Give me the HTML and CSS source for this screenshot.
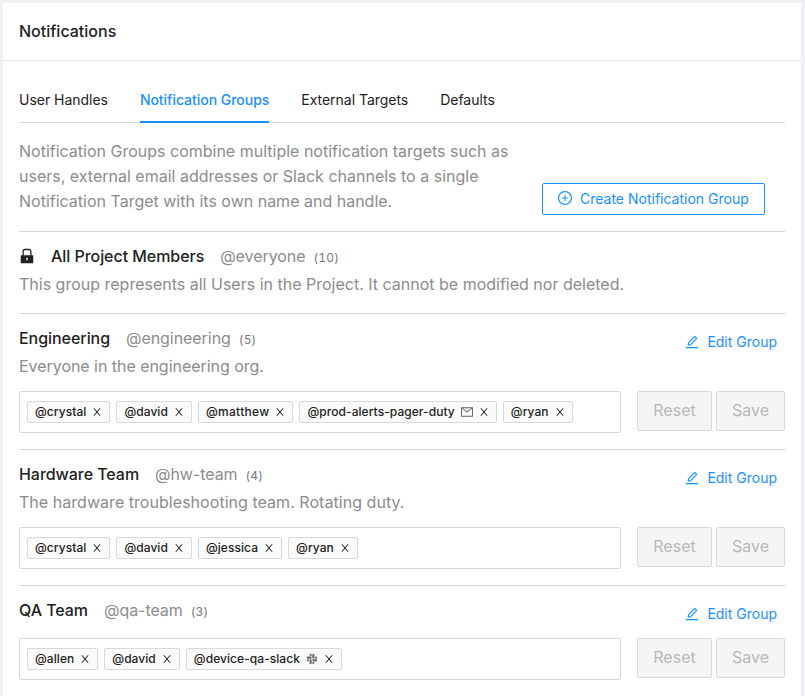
FILE: index.html
```html
<!DOCTYPE html>
<html lang="en">
<head>
<meta charset="utf-8">
<title>Notifications</title>
<link rel="stylesheet" href="styles.css">
</head>
<body>
<svg class="sprite" width="0" height="0">
  <symbol id="close" viewBox="64 64 896 896"><path d="M563.8 512l262.5-312.9c4.4-5.2.7-13.1-6.1-13.1h-79.8c-4.7 0-9.2 2.1-12.3 5.7L511.6 449.8 295.1 191.7c-3-3.6-7.5-5.7-12.3-5.7H203c-6.8 0-10.5 7.9-6.1 13.1L459.4 512 196.9 824.9A7.95 7.95 0 0 0 203 838h79.8c4.7 0 9.2-2.1 12.3-5.7l216.5-258.1 216.5 258.1c3 3.6 7.5 5.7 12.3 5.7h79.8c6.8 0 10.5-7.9 6.1-13.1L563.8 512z"/></symbol>
  <symbol id="plus" viewBox="64 64 896 896"><path d="M696 480H544V328c0-4.4-3.6-8-8-8h-48c-4.4 0-8 3.6-8 8v152H328c-4.4 0-8 3.6-8 8v48c0 4.4 3.6 8 8 8h152v152c0 4.4 3.6 8 8 8h48c4.4 0 8-3.6 8-8V544h152c4.4 0 8-3.6 8-8v-48c0-4.4-3.6-8-8-8z"/><path d="M512 64C264.6 64 64 264.6 64 512s200.6 448 448 448 448-200.6 448-448S759.4 64 512 64zm0 820c-205.4 0-372-166.6-372-372s166.6-372 372-372 372 166.6 372 372-166.6 372-372 372z"/></symbol>
  <symbol id="edit" viewBox="64 64 896 896"><path d="M257.7 752c2 0 4-.2 6-.5L431.9 722c2-.4 3.9-1.3 5.3-2.8l423.9-423.9a9.96 9.96 0 0 0 0-14.1L694.9 114.9c-1.9-1.9-4.4-2.9-7.1-2.9s-5.2 1-7.1 2.9L256.8 538.8c-1.5 1.5-2.4 3.3-2.8 5.3l-29.5 168.2a33.5 33.5 0 0 0 9.4 29.8c6.6 6.4 14.9 9.9 23.8 9.9zm67.4-174.4L687.8 215l73.3 73.3-362.7 362.6-88.9 15.7 15.6-89zM880 836H144c-17.7 0-32 14.3-32 32v36c0 4.4 3.6 8 8 8h784c4.4 0 8-3.6 8-8v-36c0-17.7-14.3-32-32-32z"/></symbol>
  <symbol id="mail" viewBox="64 64 896 896"><path d="M928 160H96c-17.7 0-32 14.3-32 32v640c0 17.7 14.3 32 32 32h832c17.7 0 32-14.3 32-32V192c0-17.7-14.3-32-32-32zm-40 110.8V792H136V270.8l-27.6-21.5 39.3-50.5 42.8 33.3h643.1l42.8-33.3 39.3 50.5-27.7 21.5zM833.6 232L512 482 190.4 232l-42.8-33.3-39.3 50.5 27.6 21.5 341.6 265.6a55.99 55.99 0 0 0 68.7 0L888 270.8l27.6-21.5-39.3-50.5-42.7 33.2z"/></symbol>
  <symbol id="lock" viewBox="64 64 896 896"><path d="M832 464h-68V240c0-70.7-57.3-128-128-128H388c-70.7 0-128 57.3-128 128v224h-68c-17.7 0-32 14.3-32 32v384c0 17.7 14.3 32 32 32h640c17.7 0 32-14.3 32-32V496c0-17.7-14.3-32-32-32zM540 701v53c0 4.4-3.6 8-8 8h-40c-4.4 0-8-3.6-8-8v-53a48.01 48.01 0 1 1 56 0zm152-237H332V240c0-30.9 25.1-56 56-56h248c30.9 0 56 25.1 56 56v224z"/></symbol>
  <symbol id="slack" viewBox="64 64 896 896"><path d="M409.4 128c-42.4 0-76.7 34.4-76.7 76.8 0 20.3 8.1 39.9 22.4 54.3 14.4 14.4 33.9 22.5 54.3 22.5h76.7v-76.8c0-42.3-34.3-76.7-76.7-76.8zm0 204.8H204.7c-42.4 0-76.7 34.4-76.7 76.8s34.4 76.8 76.7 76.8h204.6c42.4 0 76.7-34.4 76.7-76.8.1-42.4-34.3-76.8-76.6-76.8zM614 486.4c42.4 0 76.8-34.4 76.7-76.8V204.8c0-42.4-34.3-76.8-76.7-76.8-42.4 0-76.7 34.4-76.7 76.8v204.8c0 42.5 34.3 76.8 76.7 76.8zm281.4-76.8c0-42.4-34.4-76.8-76.7-76.8S742 367.2 742 409.6v76.8h76.7c42.3 0 76.7-34.4 76.7-76.8zm-76.8 128H614c-42.4 0-76.7 34.4-76.7 76.8 0 20.3 8.1 39.9 22.4 54.3 14.4 14.4 33.9 22.5 54.3 22.5h204.6c42.4 0 76.7-34.4 76.7-76.8.1-42.4-34.3-76.7-76.7-76.8zM614 742.4h-76.7v76.8c0 42.4 34.4 76.8 76.7 76.8 42.4 0 76.8-34.4 76.7-76.8.1-42.4-34.3-76.7-76.7-76.8zM409.4 537.6c-42.4 0-76.7 34.4-76.7 76.8v204.8c0 42.4 34.4 76.8 76.7 76.8 42.4 0 76.8-34.4 76.7-76.8V614.4c0-20.3-8.1-39.9-22.4-54.3-14.4-14.4-34-22.5-54.3-22.5zM128 614.4c0 20.3 8.1 39.9 22.4 54.3 14.4 14.4 33.9 22.5 54.3 22.5 42.4 0 76.8-34.4 76.7-76.8v-76.8h-76.7c-42.3 0-76.7 34.4-76.7 76.8z"/></symbol>
</svg>
<main class="card">
  <header class="card-head">Notifications</header>
  <div class="card-body">
    <nav class="tabs">
      <a class="tab">User Handles</a>
      <a class="tab active">Notification Groups</a>
      <a class="tab">External Targets</a>
      <a class="tab">Defaults</a>
    </nav>
    <section class="intro">
      <p>Notification Groups combine multiple notification targets such as users, external email addresses or Slack channels to a single Notification Target with its own name and handle.</p>
      <button class="create"><svg><use href="#plus"/></svg><span>Create Notification Group</span></button>
    </section>

    <section class="group">
      <div class="title"><svg class="lock"><use href="#lock"/></svg><h2>All Project Members</h2><span class="handle">@everyone</span><span class="count">(10)</span></div>
      <p>This group represents all Users in the Project. It cannot be modified nor deleted.</p>
    </section>

    <section class="group">
      <div class="title"><h2>Engineering</h2><span class="handle">@engineering</span><span class="count">(5)</span><button class="edit"><svg><use href="#edit"/></svg><span>Edit Group</span></button></div>
      <p class="tight">Everyone in the engineering org.</p>
      <div class="row">
        <div class="select">
          <span class="tag">@crystal<svg><use href="#close"/></svg></span>
          <span class="tag">@david<svg><use href="#close"/></svg></span>
          <span class="tag wide">@matthew<svg><use href="#close"/></svg></span>
          <span class="tag">@prod-alerts-pager-duty<svg class="kind"><use href="#mail"/></svg><svg><use href="#close"/></svg></span>
          <span class="tag">@ryan<svg><use href="#close"/></svg></span>
        </div>
        <button class="reset" disabled>Reset</button>
        <button class="save" disabled>Save</button>
      </div>
    </section>

    <section class="group">
      <div class="title"><h2>Hardware Team</h2><span class="handle">@hw-team</span><span class="count">(4)</span><button class="edit"><svg><use href="#edit"/></svg><span>Edit Group</span></button></div>
      <p class="loose">The hardware troubleshooting team. Rotating duty.</p>
      <div class="row">
        <div class="select">
          <span class="tag">@crystal<svg><use href="#close"/></svg></span>
          <span class="tag">@david<svg><use href="#close"/></svg></span>
          <span class="tag">@jessica<svg><use href="#close"/></svg></span>
          <span class="tag">@ryan<svg><use href="#close"/></svg></span>
        </div>
        <button class="reset" disabled>Reset</button>
        <button class="save" disabled>Save</button>
      </div>
    </section>

    <section class="group">
      <div class="title"><h2>QA Team</h2><span class="handle">@qa-team</span><span class="count">(3)</span><button class="edit"><svg><use href="#edit"/></svg><span>Edit Group</span></button></div>
      <div class="row after-title">
        <div class="select">
          <span class="tag">@allen<svg><use href="#close"/></svg></span>
          <span class="tag">@david<svg><use href="#close"/></svg></span>
          <span class="tag">@device-qa-slack<svg class="kind"><use href="#slack"/></svg><svg><use href="#close"/></svg></span>
        </div>
        <button class="reset" disabled>Reset</button>
        <button class="save" disabled>Save</button>
      </div>
    </section>
  </div>
</main>
</body>
</html>
```
FILE: styles.css
```css
* { box-sizing: border-box; }
body {
  margin: 0;
  padding: 3px 4px 0 3px;
  height: 696px;
  overflow: hidden;
  background: #f0f0f5;
  font-family: Inter, "Liberation Sans", sans-serif;
  font-size: 14px;
  color: #222;
}
.sprite { position: absolute; }
svg { fill: currentColor; flex: none; }
p, h2 { margin: 0; }
button { font-family: inherit; padding: 0; }
.card { background: #fff; min-height: 693px; }
.card-head {
  height: 58px;
  padding: 0 16px;
  line-height: 57px;
  font-size: 16px;
  font-weight: 500;
  border-bottom: 1px solid #e4e4e4;
}
.card-body { padding: 16px 16px 0; }
.tabs {
  display: flex;
  gap: 32px;
  height: 46px;
  border-bottom: 1px solid #d9d9d9;
}
.tab { height: 46px; line-height: 46px; white-space: nowrap; letter-spacing: -0.03px; }
.tab.active {
  color: #1890ff;
  font-weight: 500;
  border-bottom: 2px solid #1890ff;
}
.intro {
  display: flex;
  justify-content: space-between;
  height: 108px;
  padding: 16px 20px 0 0;
}
.intro p { width: 500px; }
p { font-size: 16px; line-height: 25px; color: #8c8c8c; }
.tight { letter-spacing: -0.04px; }
.loose { letter-spacing: 0.04px; }
.create {
  display: flex;
  align-items: center;
  align-self: flex-start;
  gap: 8px;
  width: 223px;
  height: 32px;
  margin-top: 44px;
  padding: 0 0 2px 15px;
  border: 1px solid #1890ff;
  border-radius: 2px;
  background: #fff;
  color: #1890ff;
  font-size: 14px;
  white-space: nowrap;
}
.create svg { width: 14px; height: 14px; }
.group { padding: 12px 0 16px; border-top: 1px solid #d9d9d9; }
.title { display: flex; height: 25px; margin-bottom: 3px; line-height: 25px; }
.title h2 { font-size: 16px; font-weight: 500; line-height: 25px; letter-spacing: -0.05px; }
.lock { width: 16px; height: 16px; margin: 4px 16px 0 0; }
.handle { margin-left: 16px; font-size: 16px; letter-spacing: -0.06px; color: #8c8c8c; }
.count {
  margin-left: 8px;
  font-size: 12px;
  line-height: 27px;
  font-variant-numeric: tabular-nums;
  letter-spacing: 0.15px;
  color: #777;
}
.edit {
  display: flex;
  align-items: center;
  gap: 8px;
  height: 32px;
  margin-left: auto;
  padding: 0 8px 0 0;
  border: 0;
  background: none;
  color: #1890ff;
  font-size: 14px;
}
.edit svg { width: 14px; height: 14px; }
.edit span { padding-bottom: 2px; }
.row { display: flex; align-items: flex-start; margin-top: 12px; }
.after-title { margin-top: 15px; }
.select {
  display: flex;
  align-items: center;
  gap: 6px;
  width: 602px;
  height: 42px;
  padding: 0 7px;
  border: 1px solid #d9d9d9;
  border-radius: 2px;
}
.tag {
  display: flex;
  align-items: center;
  gap: 6px;
  height: 22px;
  padding: 0 7px 1px;
  border: 1px solid #d9d9d9;
  border-radius: 2px;
  background: #fafafa;
  font-size: 12px;
  font-weight: 500;
  letter-spacing: 0.06px;
  white-space: nowrap;
}
.tag.wide { letter-spacing: 0.3px; }
.tag svg { width: 10px; height: 10px; }
.tag svg.kind { width: 12px; height: 12px; color: #666; }
.reset, .save {
  height: 40px;
  padding-bottom: 2px;
  border: 1px solid #d9d9d9;
  border-radius: 2px;
  background: #f5f5f5;
  color: #b8b8b8;
  font-size: 16px;
}
.reset { width: 75px; margin-left: 16px; }
.save { width: 69px; margin-left: 4px; }
```
